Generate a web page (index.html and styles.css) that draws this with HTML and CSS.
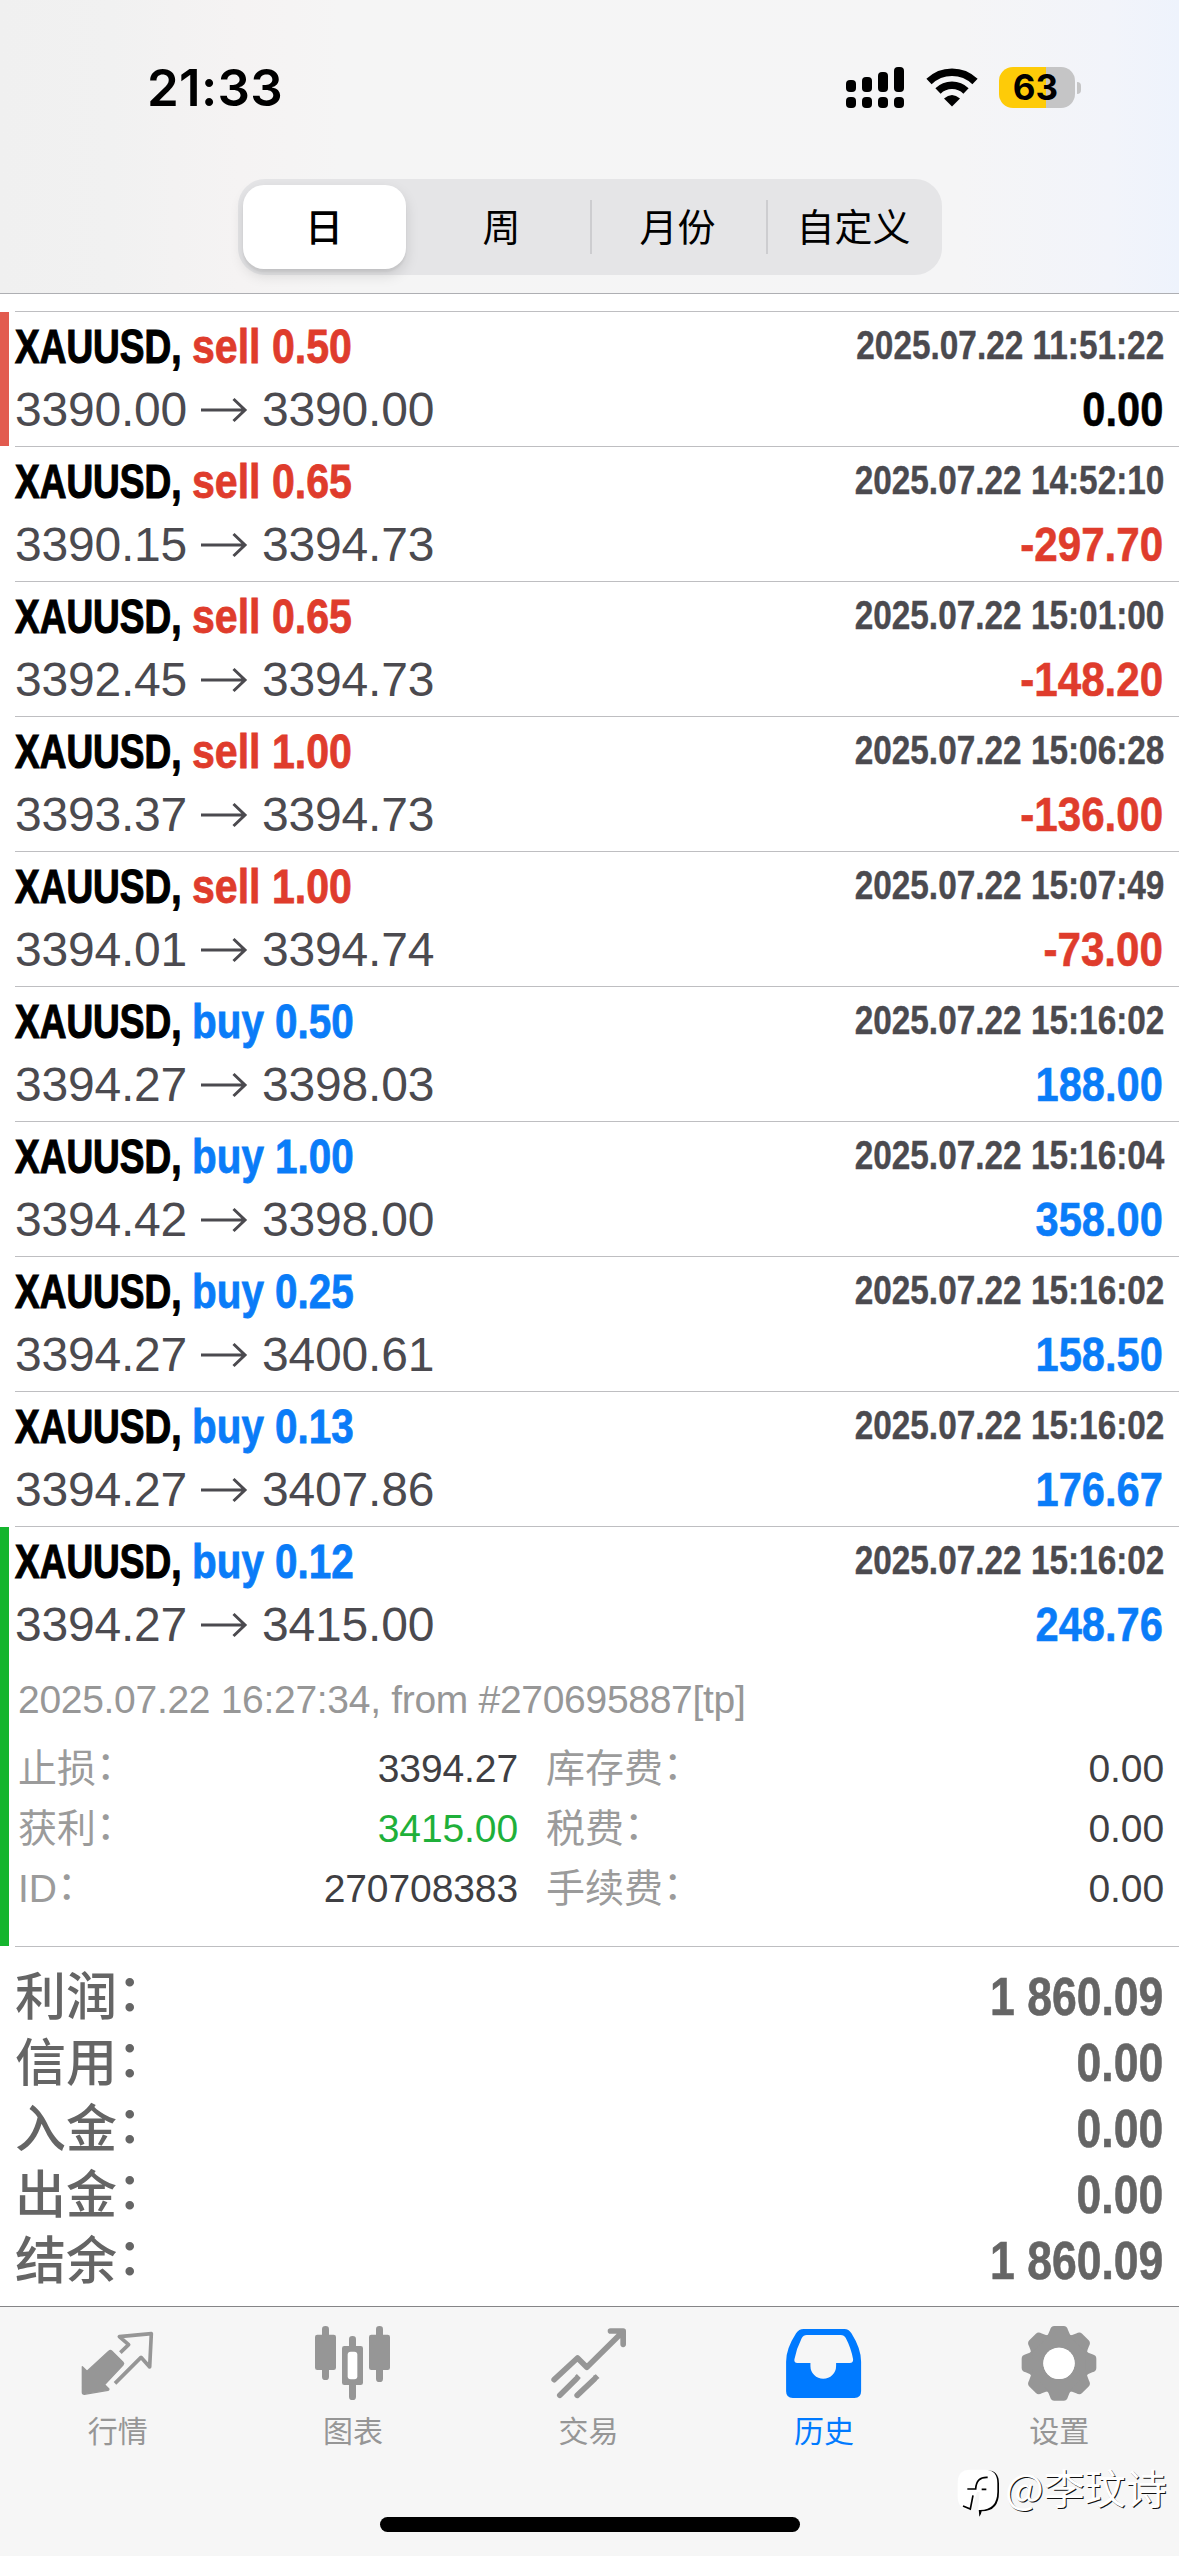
FILE: index.html
```html
<!DOCTYPE html>
<html lang="zh-CN">
<head>
<meta charset="utf-8">
<title>历史</title>
<link rel="stylesheet" href="styles.css">
</head>
<body>
<svg class="defs" aria-hidden="true">
  <symbol id="arrow" viewBox="0 0 48 28"><path d="M1 14H45M33.500 3L45 14L33.500 25" fill="none" stroke="currentColor" stroke-width="3"/></symbol>
</svg>
<div class="screen">
  <header class="header">
    <div class="status">
      <span class="clock">21:33</span>
      <div class="indicators">
        <svg class="signal" viewBox="0 0 58 41">
          <rect x="0" y="13" width="10" height="12" rx="4"/><rect x="16" y="10" width="10" height="15" rx="4"/><rect x="32" y="5" width="10" height="20" rx="4"/><rect x="48" y="0" width="10" height="25" rx="4"/>
          <rect x="0" y="30" width="10" height="11" rx="4"/><rect x="16" y="30" width="10" height="11" rx="4"/><rect x="32" y="30" width="10" height="11" rx="4"/><rect x="48" y="30" width="10" height="11" rx="4"/>
        </svg>
        <svg class="wifi" viewBox="0 0 52 41">
          <path d="M3 14.500A33 33 0 0 1 49 14.500M12 24A20 20 0 0 1 40 24" fill="none" stroke="#000" stroke-width="7.500"/>
          <path d="M18 31.500Q26 24.500 34 31.500L26 39.500Z"/>
        </svg>
        <div class="battery"><div class="cell">63</div><i class="cap"></i></div>
      </div>
    </div>
    <nav class="segments">
      <span class="seg on">日</span><span class="seg">周</span><span class="seg line">月份</span><span class="seg line">自定义</span>
    </nav>
  </header>

  <main class="list">
    <article class="deal mark-red"><div class="row top"><span class="name"><b class="sym">XAUUSD,</b><b class="side sell">sell 0.50</b></span><time class="time">2025.07.22 11:51:22</time></div><div class="row"><span class="prices">3390.00<svg class="to"><use href="#arrow"/></svg>3390.00</span><b class="value">0.00</b></div></article>
    <article class="deal"><div class="row top"><span class="name"><b class="sym">XAUUSD,</b><b class="side sell">sell 0.65</b></span><time class="time">2025.07.22 14:52:10</time></div><div class="row"><span class="prices">3390.15<svg class="to"><use href="#arrow"/></svg>3394.73</span><b class="value sell">-297.70</b></div></article>
    <article class="deal"><div class="row top"><span class="name"><b class="sym">XAUUSD,</b><b class="side sell">sell 0.65</b></span><time class="time">2025.07.22 15:01:00</time></div><div class="row"><span class="prices">3392.45<svg class="to"><use href="#arrow"/></svg>3394.73</span><b class="value sell">-148.20</b></div></article>
    <article class="deal"><div class="row top"><span class="name"><b class="sym">XAUUSD,</b><b class="side sell">sell 1.00</b></span><time class="time">2025.07.22 15:06:28</time></div><div class="row"><span class="prices">3393.37<svg class="to"><use href="#arrow"/></svg>3394.73</span><b class="value sell">-136.00</b></div></article>
    <article class="deal"><div class="row top"><span class="name"><b class="sym">XAUUSD,</b><b class="side sell">sell 1.00</b></span><time class="time">2025.07.22 15:07:49</time></div><div class="row"><span class="prices">3394.01<svg class="to"><use href="#arrow"/></svg>3394.74</span><b class="value sell">-73.00</b></div></article>
    <article class="deal"><div class="row top"><span class="name"><b class="sym">XAUUSD,</b><b class="side buy">buy 0.50</b></span><time class="time">2025.07.22 15:16:02</time></div><div class="row"><span class="prices">3394.27<svg class="to"><use href="#arrow"/></svg>3398.03</span><b class="value buy">188.00</b></div></article>
    <article class="deal"><div class="row top"><span class="name"><b class="sym">XAUUSD,</b><b class="side buy">buy 1.00</b></span><time class="time">2025.07.22 15:16:04</time></div><div class="row"><span class="prices">3394.42<svg class="to"><use href="#arrow"/></svg>3398.00</span><b class="value buy">358.00</b></div></article>
    <article class="deal"><div class="row top"><span class="name"><b class="sym">XAUUSD,</b><b class="side buy">buy 0.25</b></span><time class="time">2025.07.22 15:16:02</time></div><div class="row"><span class="prices">3394.27<svg class="to"><use href="#arrow"/></svg>3400.61</span><b class="value buy">158.50</b></div></article>
    <article class="deal"><div class="row top"><span class="name"><b class="sym">XAUUSD,</b><b class="side buy">buy 0.13</b></span><time class="time">2025.07.22 15:16:02</time></div><div class="row"><span class="prices">3394.27<svg class="to"><use href="#arrow"/></svg>3407.86</span><b class="value buy">176.67</b></div></article>
    <article class="deal open mark-green">
      <div class="row top"><span class="name"><b class="sym">XAUUSD,</b><b class="side buy">buy 0.12</b></span><time class="time">2025.07.22 15:16:02</time></div>
      <div class="row"><span class="prices">3394.27<svg class="to"><use href="#arrow"/></svg>3415.00</span><b class="value buy">248.76</b></div>
      <p class="note">2025.07.22 16:27:34, from #270695887[tp]</p>
      <div class="details">
        <span class="key">止损<i class="colon">：</i></span><span class="num">3394.27</span><span class="key">库存费<i class="colon">：</i></span><span class="num">0.00</span>
        <span class="key">获利<i class="colon">：</i></span><span class="num green">3415.00</span><span class="key">税费<i class="colon">：</i></span><span class="num">0.00</span>
        <span class="key">ID<i class="colon">：</i></span><span class="num">270708383</span><span class="key">手续费<i class="colon">：</i></span><span class="num">0.00</span>
      </div>
    </article>
    <section class="summary">
      <div class="total"><span class="label">利润<i class="colon">：</i></span><b class="sum">1 860.09</b></div>
      <div class="total"><span class="label">信用<i class="colon">：</i></span><b class="sum">0.00</b></div>
      <div class="total"><span class="label">入金<i class="colon">：</i></span><b class="sum">0.00</b></div>
      <div class="total"><span class="label">出金<i class="colon">：</i></span><b class="sum">0.00</b></div>
      <div class="total"><span class="label">结余<i class="colon">：</i></span><b class="sum">1 860.09</b></div>
    </section>
  </main>

  <footer class="footer">
    <nav class="tabs">
      <a class="tab"><svg class="icon" viewBox="29 48 228 228">
        <path d="M36 170L50 184L116 123Q120 119 124 123L158 157Q162 161 158 165L103 224L115 236Q117 240 113 241L42 253Q36 253 36 247Z" fill="currentColor" stroke="currentColor" stroke-width="4" stroke-linejoin="round"/>
        <path d="M150 128L175 104L147 80L243 71L238 171L212 142L134 220" fill="none" stroke="currentColor" stroke-width="11" stroke-linejoin="round"/></svg>行情</a>
      <a class="tab"><svg class="icon" viewBox="945 108 228 228">
        <g fill="currentColor"><rect x="945" y="134" width="63" height="106" rx="7"/><rect x="966" y="108" width="21" height="162" rx="10"/><rect x="1107" y="134" width="63" height="106" rx="7"/><rect x="1128" y="108" width="21" height="168" rx="10"/><rect x="1026" y="168" width="63" height="117" rx="7"/><rect x="1047" y="138" width="21" height="192" rx="10"/></g><rect x="1043" y="185" width="29" height="83" rx="9" fill="#fff"/></svg>图表</a>
      <a class="tab"><svg class="icon" viewBox="271.500 108 228 228">
        <g fill="none" stroke="currentColor" stroke-width="17" stroke-linecap="round" stroke-linejoin="round"><path d="M281 269L351 204L379 232L486 126M450 123H488V163"/><path d="M298 316L348 266M350 316L402 267"/></g>
        <path d="M343 258L349 252L361 264L355 270ZM397 258L406 253L417 264L408 271Z" fill="currentColor"/></svg>交易</a>
      <a class="tab active"><svg class="icon" viewBox="977.700 108 228 228">
        <path fill="currentColor" fill-rule="evenodd" d="M1031 117H1153Q1166 117 1174 130Q1203 176 1203 215V304Q1203 324 1183 324H998Q978 324 978 304V215Q978 176 1008 130Q1016 117 1031 117ZM1040 135H1142Q1152 135 1157 144Q1173 174 1179 208Q1180 219 1169 219H1128V228A38.500 38.500 0 0 1 1051 228V219H1012Q1001 219 1003 208Q1009 176 1025 144Q1030 135 1040 135Z"/></svg>历史</a>
      <a class="tab"><svg class="icon" viewBox="-114 -112 228 228">
        <defs><path id="tooth" d="M-38 -80Q-32 -86 -27 -100Q-24 -112 -14 -112H14Q24 -112 27 -100Q32 -86 38 -80Z"/></defs>
        <circle r="69" fill="none" stroke="currentColor" stroke-width="44"/>
        <g fill="currentColor"><use href="#tooth"/><use href="#tooth" transform="rotate(45)"/><use href="#tooth" transform="rotate(90)"/><use href="#tooth" transform="rotate(135)"/><use href="#tooth" transform="rotate(180)"/><use href="#tooth" transform="rotate(225)"/><use href="#tooth" transform="rotate(270)"/><use href="#tooth" transform="rotate(315)"/></g><circle r="47" fill="#fff"/></svg>设置</a>
    </nav>
    <div class="home"></div>
    <div class="watermark">
      <svg class="logo" viewBox="36 40 132 150">
        <path d="M75 45H120Q157 45 157 85V110Q157 168 105 168Q104 176 98 184L96 160H78Q38 165 38 125V85Q38 45 75 45Z" fill="#000" transform="translate(5 2)"/>
        <path d="M75 45H120Q157 45 157 85V110Q157 166 105 166H75Q38 165 38 125V85Q38 45 75 45Z" fill="#fff"/>
        <path d="M96 112H104L98 182Q86 182 80 166Z" fill="#f6f6f6"/>
        <path d="M128 68Q94 66 92 103H67M84 122L76 163L54 154M110 104H124" fill="none" stroke="#000" stroke-width="5"/>
      </svg>
      <span class="handle">@李玟诗</span>
    </div>
  </footer>
</div>
</body>
</html>
```
FILE: styles.css
```css
* { box-sizing: border-box; margin: 0; padding: 0; }
body { width: 1179px; height: 2556px; overflow: hidden; background: #fff; font-family: "Liberation Sans", "Noto Sans CJK SC", sans-serif; color: #000; }
i { font-style: normal; }
.defs { display: none; }
.screen { display: flex; flex-direction: column; height: 2556px; }

.header { height: 294px; flex: none; border-bottom: 1px solid #aeafb3; background: linear-gradient(90deg, #f0f0f0 0, #f1f1f1 110px, #f5f3f3 240px, #f5f5f5 340px, #f5f5f6 960px, #f2f4fa 1110px, #eef3fc 100%); display: flex; flex-direction: column; align-items: center; }
.status { width: 100%; height: 179px; display: flex; justify-content: space-between; padding: 58px 98px 0 147px; }
.clock { font: 600 51px/60px Inter, sans-serif; letter-spacing: .3px; }
.indicators { display: flex; padding-top: 9px; }
.signal { width: 58px; height: 41px; }
.wifi { width: 52px; height: 41px; margin: 0 21px 0 22px; }
.battery { display: flex; align-items: center; gap: 2px; height: 41px; }
.cell { width: 76px; height: 41px; border-radius: 14px; background: linear-gradient(90deg, #fecb08 47px, #c5c5c6 47px); font: 700 35px/41px Inter, sans-serif; text-align: center; padding-right: 3px; }
.cap { width: 4px; height: 12px; border-radius: 0 6px 6px 0; background: #c5c5c6; }
.segments { display: flex; width: 704px; height: 96px; border-radius: 27px; background: #e5e5e7; }
.seg { width: 176px; height: 96px; display: flex; align-items: center; justify-content: center; font-size: 38px; line-height: 60px; padding-top: 1px; }
.seg.line { background: linear-gradient(#cdcdd0, #cdcdd0) left center / 2px 54px no-repeat; }
.seg.on { width: 163px; height: 84px; margin: 6px 8px 6px 5px; border-radius: 21px; background: #fff; font-weight: 500; box-shadow: 0 6px 14px rgba(0, 0, 0, .13), 0 3px 2px rgba(0, 0, 0, .05); }

.list { flex: 1; padding-top: 17px; }
.deal { height: 135px; padding: 3px 15px 0; background: linear-gradient(#bebec1, #bebec1) 15px 0 / 100% 1px no-repeat; }
.mark-red { background: linear-gradient(#bebec1, #bebec1) 15px 0 / 100% 1px no-repeat, linear-gradient(#e25b4f, #e25b4f) 0 1px / 9px 100% no-repeat; }
.mark-green { background: linear-gradient(#bebec1, #bebec1) 15px 0 / 100% 1px no-repeat, linear-gradient(#15b52e, #15b52e) 0 1px / 9px 100% no-repeat; }
.open { height: 420px; }
.row { display: flex; justify-content: space-between; height: 63px; line-height: 63px; }
.row.top { height: 64px; line-height: 64px; }
.name { display: flex; font-size: 49px; }
.sym { width: 177px; transform: scaleX(.755); transform-origin: left; -webkit-text-stroke: 1.2px currentColor; }
.side { transform: scaleX(.838); transform-origin: left; -webkit-text-stroke: .8px currentColor; }
.side.buy { transform: scaleX(.825); }
.sell { color: #df3c2c; }
.buy { color: #0a7cf8; }
.time { font-size: 40px; font-weight: 700; line-height: 63px; color: #4b4a4f; transform: scaleX(.834); transform-origin: right; -webkit-text-stroke: .4px currentColor; }
.prices { display: flex; align-items: center; font-size: 48px; letter-spacing: -.2px; color: #4b4a4f; }
.to { width: 48px; height: 28px; margin: 0 14px 0 13px; }
.value { font-size: 49px; transform: translateX(-1px) scaleX(.85); transform-origin: right; -webkit-text-stroke: .6px currentColor; }
.value.sell { transform: translateX(-1px) scaleX(.86); }
.note { margin-top: 14px; padding-left: 3px; height: 69px; line-height: 60px; font-size: 39px; letter-spacing: -.3px; color: #979797; }
.details { display: grid; grid-template-columns: 200px 303px 299px 1fr; grid-auto-rows: 60px; line-height: 60px; font-size: 39px; }
.key { padding-left: 3px; color: #9b9b9b; }
.key:nth-child(4n+3) { padding-left: 28px; }
.num { text-align: right; color: #3f3f43; letter-spacing: -.1px; }
.num.green { color: #1fb03a; }
.colon { vertical-align: .07em; line-height: 0; }

.summary { padding: 18px 15px 0; background: linear-gradient(#bebec1, #bebec1) 15px 0 / 100% 1px no-repeat; color: #656565; }
.total { display: flex; justify-content: space-between; height: 66px; line-height: 66px; }
.label { font-size: 51px; font-weight: 500; padding-top: 1px; }
.sum { font-size: 53px; transform: translateX(-1px) scaleX(.84); transform-origin: right; -webkit-text-stroke: .6px currentColor; }

.footer { height: 250px; flex: none; border-top: 1px solid #858587; background: #f6f6f6; display: flex; flex-direction: column; align-items: center; position: relative; }
.tabs { width: 100%; height: 210px; display: flex; padding: 19px 2px 0 0; }
.tab { flex: 1; display: flex; flex-direction: column; align-items: center; gap: 12px; font-size: 30px; line-height: 36px; color: #969696; }
.tab.active { color: #007aff; }
.icon { width: 76px; height: 76px; }
.home { width: 420px; height: 15px; border-radius: 8px; background: #000; }
.watermark { position: absolute; left: 957px; top: 161px; display: flex; align-items: flex-start; gap: 4px; color: #fff; }
.logo { width: 44px; height: 50px; }
.handle { font: 41px/36px "Noto Sans CJK SC", sans-serif; text-shadow: 1px 1px 0 #111; }
```
